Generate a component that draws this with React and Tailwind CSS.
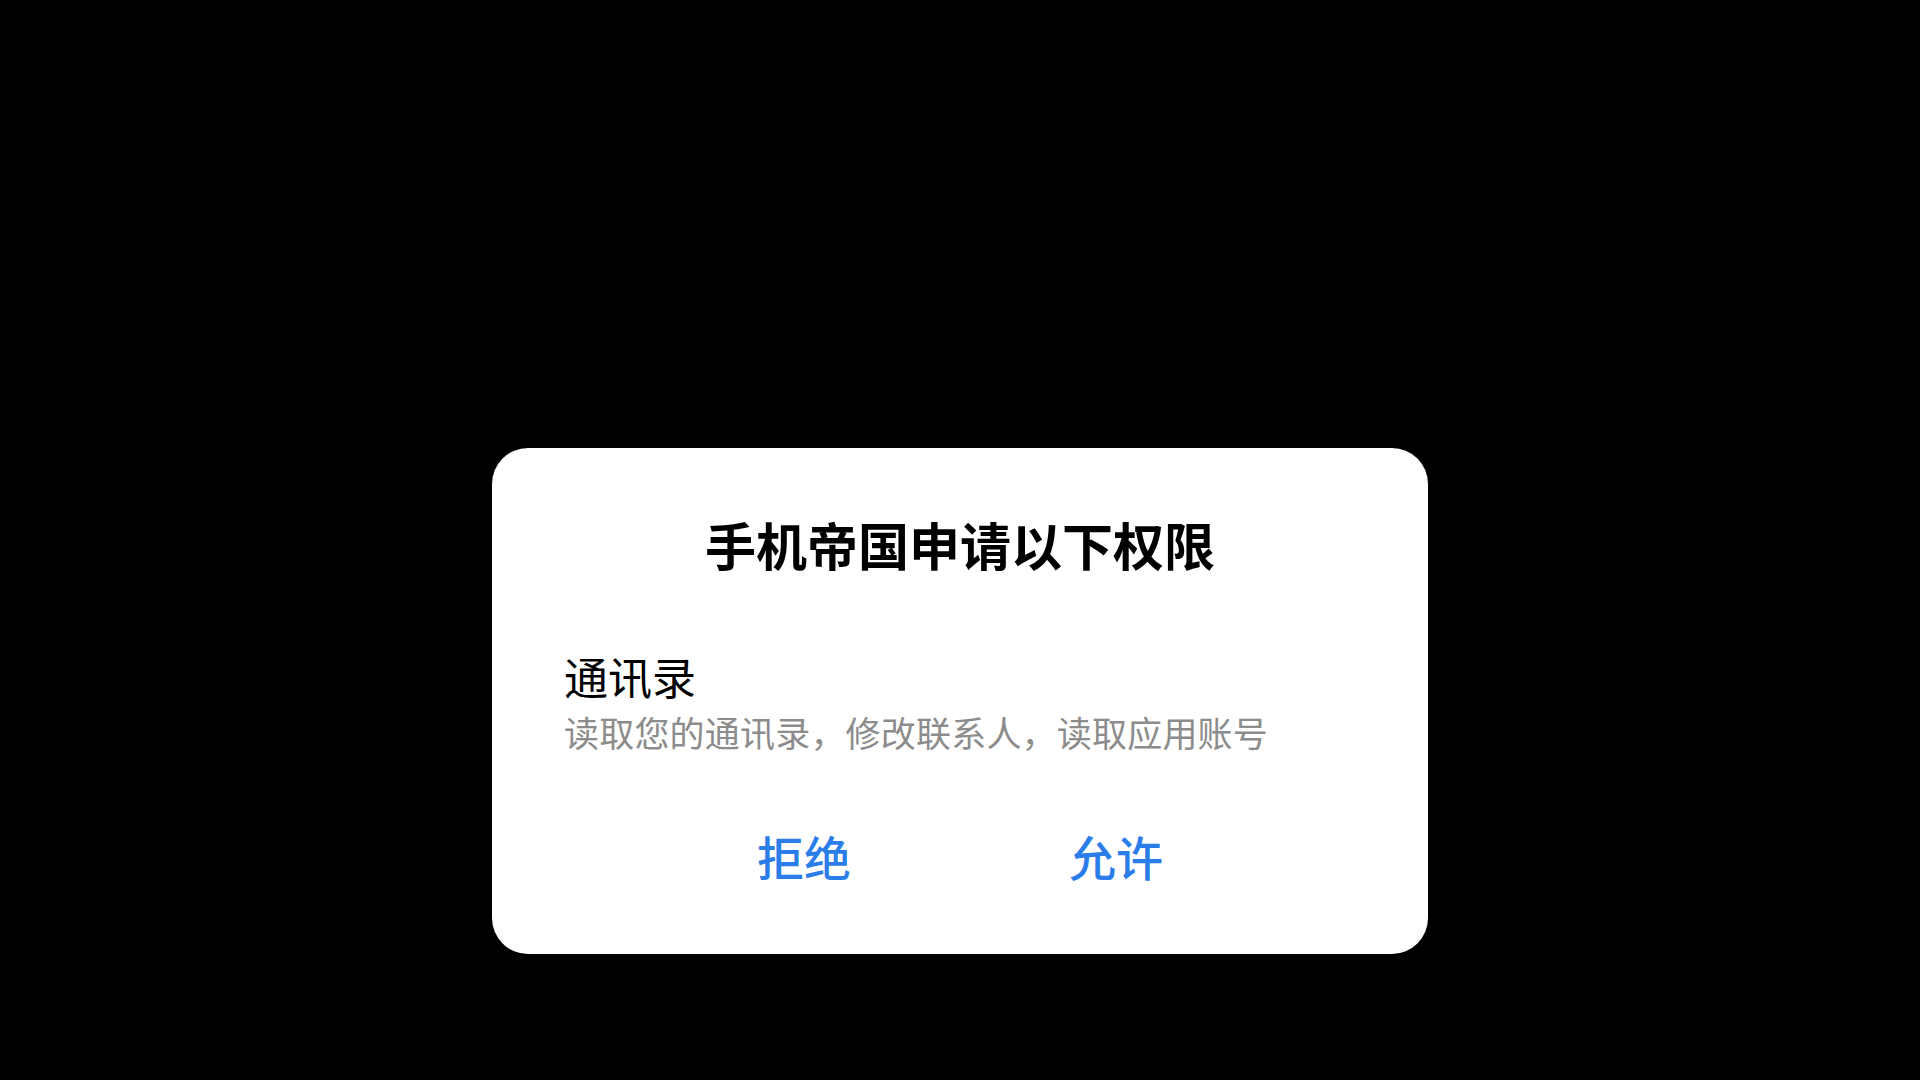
import React from 'react'

const App = () => {
  return (
    <div
      className="w-full h-screen bg-black flex justify-center pt-[448px]"
      style={{ fontFamily: '"Noto Sans CJK SC", "Noto Sans", sans-serif' }}
    >
      <div className="w-[936px] h-[506px] bg-white rounded-[36px] flex flex-col">
        {/* Title */}
        <h1 className="mt-[71px] text-center text-[51px] leading-none font-bold text-black">
          手机帝国申请以下权限
        </h1>

        {/* Permission */}
        <div className="mt-[84px] px-[72px]">
          <p className="text-[44px] leading-none text-black">通讯录</p>
          <p className="mt-[16px] text-[35px] leading-none text-[#8c8c8c] tracking-[0.2px]">
            读取您的通讯录，修改联系人，读取应用账号
          </p>
        </div>

        {/* Actions */}
        <div className="mt-[83px] flex justify-center">
          <button className="w-[312px] text-center text-[47px] leading-none font-medium text-[#2b7de9]">
            拒绝
          </button>
          <button className="w-[312px] text-center text-[47px] leading-none font-medium text-[#2b7de9]">
            允许
          </button>
        </div>
      </div>
    </div>
  )
}

export default App
